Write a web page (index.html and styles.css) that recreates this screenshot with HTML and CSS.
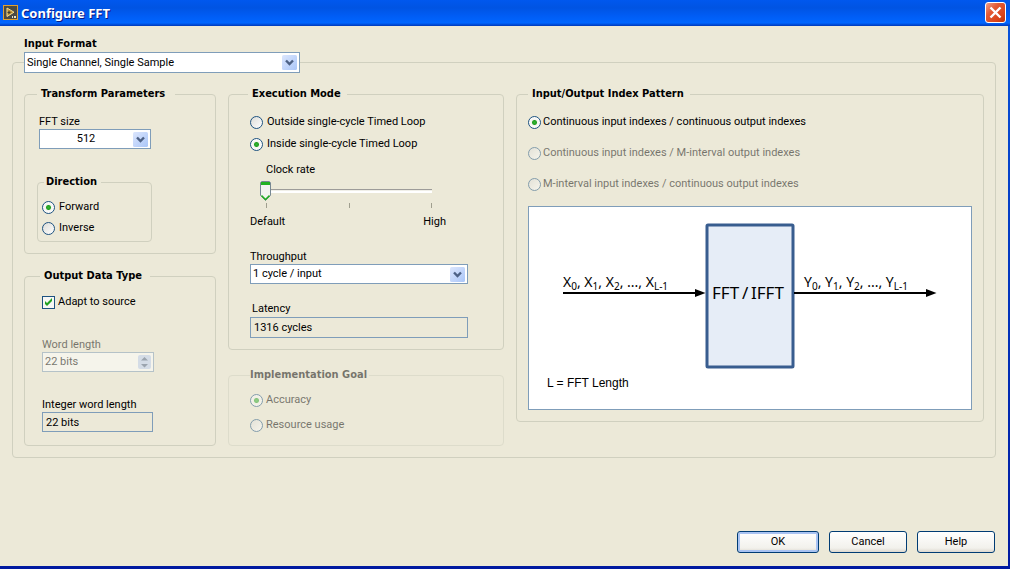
FILE: index.html
```html
<!DOCTYPE html>
<html lang="en">
<head>
<meta charset="utf-8">
<title>Configure FFT</title>
<link rel="stylesheet" href="styles.css">
</head>
<body>
<div class="window">
  <header class="titlebar">
    <svg class="app-icon" width="15" height="15" viewBox="0 0 15 15" aria-hidden="true">
      <rect x="0.5" y="0.5" width="14" height="14" fill="#4a4a44" stroke="#e0a030"/>
      <path d="M4 3v8.500L11 7.200z" fill="#b98a2c" stroke="#f3dc94"/>
      <path d="M4.500 7.500h3M6 6v3" stroke="#3b3a34"/>
      <path d="M9 11h1v2h-1zM11 11h2v2h-2z" fill="#e8e4d0"/>
    </svg>
    <h1 class="title">Configure FFT</h1>
    <button class="close" type="button" aria-label="Close">
      <svg width="13" height="13" viewBox="0 0 13 13" aria-hidden="true"><path d="M1.500 1.500l10 10M11.500 1.500l-10 10" stroke="#fff" stroke-width="2.400"/></svg>
    </button>
  </header>

  <form class="dialog">
    <label class="format-label" for="format">Input Format</label>
    <fieldset class="group outer">
      <legend class="format-legend">
        <select class="combo" id="format"><option>Single Channel, Single Sample</option></select>
      </legend>
      <div class="columns">
        <div class="column">
          <fieldset class="group params">
            <legend>Transform Parameters</legend>
            <div class="field inset">
              <label for="size">FFT size</label>
              <select class="combo centered" id="size"><option>512</option></select>
            </div>
            <fieldset class="group direction">
              <legend>Direction</legend>
              <label class="choice"><input type="radio" name="direction" checked>Forward</label>
              <label class="choice"><input type="radio" name="direction">Inverse</label>
            </fieldset>
          </fieldset>
          <fieldset class="group output">
            <legend>Output Data Type</legend>
            <label class="choice tight"><input type="checkbox" checked>Adapt to source</label>
            <div class="field disabled">
              <label for="word">Word length</label>
              <div class="spin">
                <input id="word" type="text" value="22 bits" disabled>
                <button class="spin-button" type="button" disabled aria-label="Change word length">
                  <svg width="7" height="12" viewBox="0 0 7 12" aria-hidden="true"><path d="M0 4.500L3.500 1L7 4.500zM0 8h7L3.500 11.500z" fill="#4d6185"/></svg>
                </button>
              </div>
            </div>
            <div class="field">
              <label for="integer">Integer word length</label>
              <input class="readout" id="integer" type="text" value="22 bits" readonly>
            </div>
          </fieldset>
        </div>

        <div class="column">
          <fieldset class="group mode">
            <legend>Execution Mode</legend>
            <div class="choices">
              <label class="choice"><input type="radio" name="mode">Outside single-cycle Timed Loop</label>
              <label class="choice"><input type="radio" name="mode" checked>Inside single-cycle Timed Loop</label>
            </div>
            <div class="clock">
              <label class="clock-label" for="clock">Clock rate</label>
              <input class="slider" id="clock" type="range" min="0" max="2" value="0">
              <div class="ticks"><i></i><i></i><i></i></div>
              <div class="ends"><span>Default</span><span>High</span></div>
            </div>
            <div class="field">
              <label for="throughput">Throughput</label>
              <select class="combo" id="throughput"><option>1 cycle / input</option></select>
            </div>
            <div class="field">
              <label class="latency-label" for="latency">Latency</label>
              <input class="readout" id="latency" type="text" value="1316 cycles" readonly>
            </div>
          </fieldset>
          <fieldset class="group goal disabled" disabled>
            <legend>Implementation Goal</legend>
            <label class="choice tight"><input type="radio" name="goal" checked>Accuracy</label>
            <label class="choice tight"><input type="radio" name="goal">Resource usage</label>
          </fieldset>
        </div>

        <div class="column">
          <fieldset class="group pattern">
            <legend>Input/Output Index Pattern</legend>
            <div class="choices">
              <label class="choice tight"><input type="radio" name="pattern" checked>Continuous input indexes / continuous output indexes</label>
              <label class="choice tight disabled"><input type="radio" name="pattern" disabled>Continuous input indexes / M-interval output indexes</label>
              <label class="choice tight disabled"><input type="radio" name="pattern" disabled>M-interval input indexes / continuous output indexes</label>
            </div>
            <svg class="diagram" viewBox="0 0 442 202" role="img" aria-label="FFT block diagram">
              <rect x="178" y="18" width="86" height="142" rx="1" fill="#e6edf7" stroke="#385d8f" stroke-width="3"/>
              <path d="M34 86h134M265 86h132" stroke="#000" stroke-width="2"/>
              <path d="M166 82l10.500 4l-10.500 4zM397 82l10.500 4l-10.500 4z"/>
              <text class="series" x="34" y="80">X<tspan class="sub" dy="3">0</tspan><tspan dy="-3">, X</tspan><tspan class="sub" dy="3">1</tspan><tspan dy="-3">, X</tspan><tspan class="sub" dy="3">2</tspan><tspan dy="-3">, ..., X</tspan><tspan class="sub" dy="3">L-1</tspan></text>
              <text class="series" x="275" y="80">Y<tspan class="sub" dy="3">0</tspan><tspan dy="-3">, Y</tspan><tspan class="sub" dy="3">1</tspan><tspan dy="-3">, Y</tspan><tspan class="sub" dy="3">2</tspan><tspan dy="-3">, ..., Y</tspan><tspan class="sub" dy="3">L-1</tspan></text>
              <text class="block" y="92"><tspan x="183">FFT</tspan><tspan x="213">/</tspan><tspan x="222">IFFT</tspan></text>
              <text class="note" x="18" y="180">L = FFT Length</text>
            </svg>
          </fieldset>
        </div>
      </div>
    </fieldset>
    <div class="actions">
      <button class="push primary" type="submit">OK</button>
      <button class="push" type="button">Cancel</button>
      <button class="push" type="button">Help</button>
    </div>
  </form>
</div>
</body>
</html>
```
FILE: styles.css
```css
* { box-sizing: border-box; }

body {
  margin: 0;
  background: #fff;
  color: #000;
  font: 11px/14px Roboto, "DejaVu Sans", sans-serif;
}

input, select, button { font: inherit; color: inherit; margin: 0; }

.window {
  display: flex;
  flex-direction: column;
  min-height: calc(100vh - 1px);
  margin-bottom: 1px;
  background: #ece9d8;
  border-right: 2px solid #0831d9;
  border-bottom: 3px solid #001590;
  border-image: linear-gradient(#0855dd, #0019a0) 3;
}

.titlebar {
  display: flex;
  align-items: center;
  gap: 3px;
  height: 26px;
  margin-right: -2px;
  padding: 0 4px 1px 3px;
  background: linear-gradient(#0058ee 0, #0054e3 30%, #005cf4 60%, #0066ff 88%, #0047d0 96%, #003ab8 100%);
}

.title {
  flex: 1;
  margin: 0;
  color: #fff;
  font: bold 13px/18px "Noto Sans", sans-serif;
  text-shadow: 1px 1px 0 #0a1883;
}

.close {
  display: grid;
  place-items: center;
  width: 21px;
  height: 21px;
  padding: 0;
  border: 1px solid #fff;
  border-radius: 3px;
  background: linear-gradient(135deg, #f0a08a 0, #e35a35 35%, #da4318 75%, #b83208 100%);
}

.dialog {
  flex: 1;
  display: flex;
  flex-direction: column;
  padding: 10px 12px 13px;
}

.format-label {
  align-self: flex-start;
  margin-left: 12px;
  line-height: 16px;
  font-family: "DejaVu Sans Condensed", sans-serif;
  font-weight: bold;
}

.group {
  min-width: 0;
  margin: 0;
  padding: 0 11px;
  border: 1px solid #d0d0bf;
  border-radius: 4px;
}

legend {
  padding: 0 6px 0 4px;
  line-height: 16px;
  font-family: "DejaVu Sans Condensed", sans-serif;
  font-weight: bold;
}

.outer { padding: 13px 11px 11px; }
.format-legend { width: 276px; margin: 0; padding: 0; font-family: inherit; font-weight: normal; }
.format-legend .combo { display: block; height: 21px; }

.columns {
  display: grid;
  grid-template-columns: 192px 276px minmax(0, 1fr);
  gap: 12px;
  align-items: start;
}

.params { padding: 13px 12px 11px; }
.params > legend { margin-left: 0; padding-right: 10px; }
.params .field { width: 112px; }
.inset { margin-left: 2px; }

.direction {
  width: 115px;
  margin-top: 25px;
  padding: 10px 4px 6px;
}
.direction > legend { margin-left: 2px; padding: 0 4px 0 2px; }
.direction .choice + .choice { margin-top: 7px; }

.output { margin-top: 14px; padding: 11px 17px 13px; }
.output > legend { margin-left: -2px; padding-right: 8px; }
.output .field { width: 111px; margin-top: 26px; }
.output .field.disabled { width: 112px; margin-top: 29px; }

.mode { padding: 13px 35px 11px 21px; }
.mode > legend { margin-left: -2px; }
.mode .choices { gap: 8px; }

.goal { margin-top: 17px; padding: 10px 21px 13px; }
.goal > legend { padding: 0 2px 0 0; }
.goal .choice + .choice { margin-top: 11px; }

.pattern { padding: 13px 11px 11px; }
.pattern > legend { margin-left: 0; }
.pattern .choices { gap: 17px; margin-bottom: 15px; }

.choices { display: flex; flex-direction: column; }

.choice {
  display: flex;
  align-items: center;
  gap: 4px;
  white-space: nowrap;
}
.choice.tight { gap: 3px; }
.pattern .choice { gap: 2px; }

input[type="radio"], input[type="checkbox"] {
  appearance: none;
  flex: none;
  width: 13px;
  height: 13px;
  border: 1px solid #1d5281;
  background: linear-gradient(135deg, #dcdcd7, #fff);
}
input[type="radio"] { border-radius: 50%; }
input[type="radio"]:checked {
  background: radial-gradient(circle, #37b337 0, #21a121 2px, #f4f4f0 3px, #fff 6px);
}
input[type="checkbox"]:checked {
  background: url("data:image/svg+xml,%3Csvg xmlns='http://www.w3.org/2000/svg' viewBox='0 0 11 11'%3E%3Cpath d='M2 4v3l2 2 5-5V1L4 6z' fill='%2321a121'/%3E%3C/svg%3E") #f7f7f5;
}

.field { display: flex; flex-direction: column; }
.field > label { align-self: flex-start; white-space: nowrap; }

.combo {
  appearance: none;
  width: 100%;
  height: 20px;
  padding: 0 20px 0 2px;
  border: 1px solid #7f9db9;
  border-radius: 0;
  background: url("data:image/svg+xml,%3Csvg xmlns='http://www.w3.org/2000/svg' width='15' height='15'%3E%3Cdefs%3E%3ClinearGradient id='g' x2='1' y2='1'%3E%3Cstop stop-color='%23dce6fd'/%3E%3Cstop offset='1' stop-color='%23aac6f8'/%3E%3C/linearGradient%3E%3C/defs%3E%3Crect width='15' height='15' rx='1.500' fill='url(%23g)'/%3E%3Cpath d='M4 5.500l3.500 3.500L11 5.500' fill='none' stroke='%234d6185' stroke-width='2.400'/%3E%3C/svg%3E") right 2px center no-repeat #fff;
}
.centered { text-align: center; text-align-last: center; }

.readout {
  width: 100%;
  height: 20px;
  padding: 0 3px;
  border: 1px solid #7f9db9;
  background: transparent;
}
.mode .readout { height: 21px; }

.spin {
  display: flex;
  align-items: center;
  height: 20px;
  padding-right: 2px;
  border: 1px solid #7f9db9;
  background: #fff;
}
.spin input { flex: 1; min-width: 0; padding: 0 2px; border: 0; background: transparent; }
.spin-button {
  display: grid;
  place-items: center;
  width: 13px;
  height: 14px;
  padding: 0;
  border: 0;
  border-radius: 2px;
  background: #bdd0f5;
}

.disabled { opacity: 0.5; }

.clock { margin: 12px 0 21px; }
.clock-label { display: block; width: max-content; margin-left: 16px; }
.slider {
  appearance: none;
  display: block;
  width: 172px;
  height: 20px;
  margin: 4px 0 0 10px;
  background: linear-gradient(#9d9c99 0 1px, #f0efe8 1px 2px, #fff 2px 4px) right 8px / 100% 4px no-repeat;
}
.slider::-webkit-slider-thumb {
  appearance: none;
  width: 11px;
  height: 20px;
  background: url("data:image/svg+xml,%3Csvg xmlns='http://www.w3.org/2000/svg' width='11' height='20'%3E%3Cpath d='M.5 1.500l1-1h8l1 1v13l-5 5-5-5z' fill='%23f3f3ef' stroke='%23778892'/%3E%3Cpath d='M1 1h9v3H1z' fill='%2321b121'/%3E%3Cpath d='M1.500 14.500l4 4 4-4' fill='none' stroke='%2321b121' stroke-width='1.500'/%3E%3C/svg%3E") #ece9d8;
}
.ticks { display: flex; justify-content: space-between; width: 166px; margin: 2px 0 0 16px; }
.ticks i { width: 1px; height: 5px; background: #a09f8f; }
.ends { display: flex; justify-content: space-between; width: 196px; margin-top: 7px; }

.mode .field + .field { margin-top: 18px; }
.latency-label { margin: 0 0 1px 2px; }

.diagram { display: block; width: 100%; border: 1px solid #7f9db9; background: #fff; }
.series { font: 14px "Noto Sans", sans-serif; }
.sub { font-size: 10px; }
.block { font: 17px "Noto Sans", sans-serif; }
.note { font: 12px "Liberation Sans", Arial, sans-serif; }

.actions {
  display: flex;
  justify-content: flex-end;
  gap: 10px;
  margin-top: auto;
  padding-right: 1px;
}
.push {
  width: 78px;
  height: 22px;
  padding: 0;
  border: 1px solid #003c74;
  border-radius: 3px;
  background: linear-gradient(#fff, #f2f1ec 80%, #dcd8cf);
}
.primary { width: 82px; box-shadow: inset 0 0 0 2px #a9c3f2; }
```
